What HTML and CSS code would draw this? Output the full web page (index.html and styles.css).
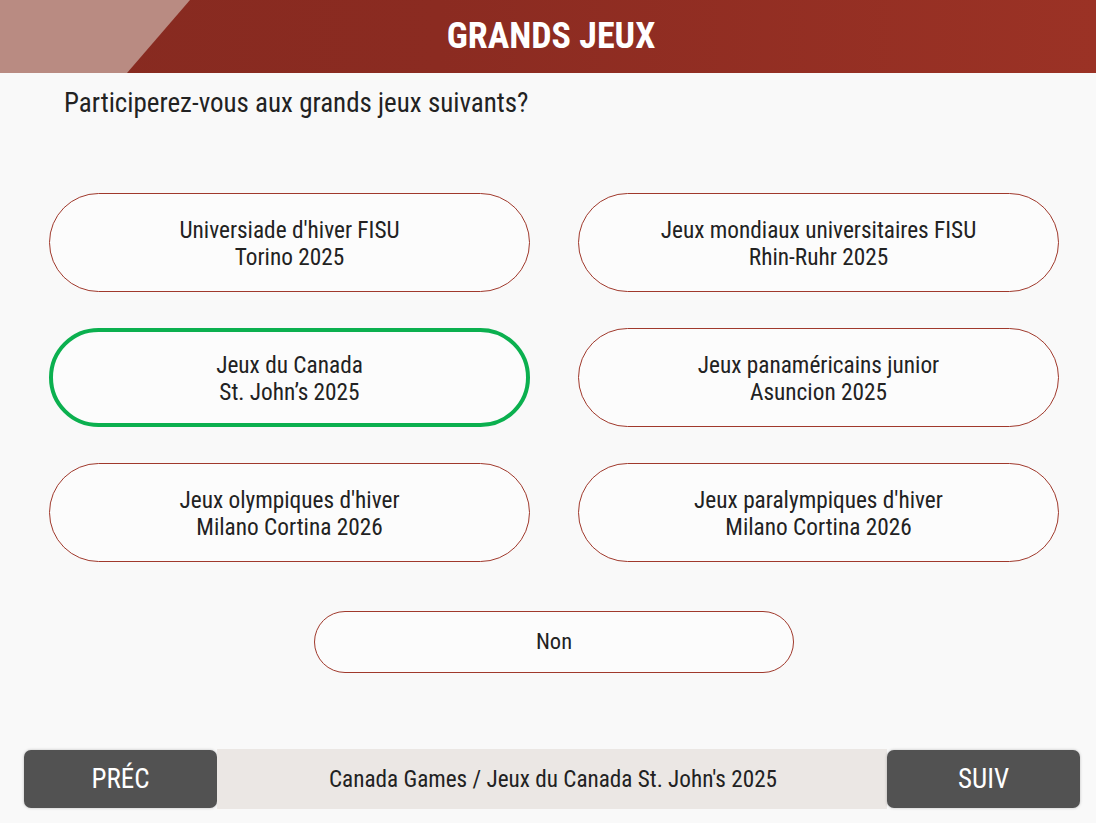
FILE: index.html
```html
<!DOCTYPE html>
<html lang="fr">
<head>
<meta charset="utf-8">
<title>Grands jeux</title>
<link rel="stylesheet" href="styles.css">
</head>
<body>
<div class="page">
  <header class="header">
    <h1 class="title">GRANDS JEUX</h1>
  </header>
  <p class="question">Participerez-vous aux grands jeux suivants?</p>
  <div class="options">
    <button class="option">Universiade d'hiver FISU<br>Torino 2025</button>
    <button class="option">Jeux mondiaux universitaires FISU<br>Rhin-Ruhr 2025</button>
    <button class="option selected">Jeux du Canada<br>St. John’s 2025</button>
    <button class="option">Jeux panaméricains junior<br>Asuncion 2025</button>
    <button class="option">Jeux olympiques d'hiver<br>Milano Cortina 2026</button>
    <button class="option">Jeux paralympiques d'hiver<br>Milano Cortina 2026</button>
  </div>
  <div class="none-row">
    <button class="option none">Non</button>
  </div>
  <footer class="footer">
    <button class="nav">PRÉC</button>
    <div class="status">Canada Games / Jeux du Canada St. John's 2025</div>
    <button class="nav">SUIV</button>
  </footer>
</div>
</body>
</html>
```
FILE: styles.css
```css
* { box-sizing: border-box; }
html, body { margin: 0; padding: 0; }
body {
  background: #f9f9f9;
  font-family: "Roboto Condensed", "Roboto", "Liberation Sans", sans-serif;
  font-stretch: condensed;
  color: #222;
}
.page {
  width: 1096px;
  height: 823px;
  display: flex;
  flex-direction: column;
  overflow: hidden;
}
.header {
  position: relative;
  height: 73px;
  flex: none;
  background: linear-gradient(90deg, #862a20 0%, #8b2b21 40%, #9b3225 100%);
  display: flex;
  align-items: center;
  justify-content: center;
}
.header::before {
  content: "";
  position: absolute;
  left: 0; top: 0; bottom: 0;
  width: 191px;
  background: #b98b82;
  clip-path: polygon(0 0, 190px 0, 127px 100%, 0 100%);
}
.title {
  margin: 0;
  color: #fff;
  font-size: 36px;
  font-weight: 700;
  position: relative;
  top: -1px;
  left: 3px;
}
.question {
  margin: 12px 0 0 64px;
  font-size: 27px;
  line-height: 36px;
  color: #222;
}
.options {
  margin: 72px 0 0 49px;
  display: grid;
  grid-template-columns: 481px 481px;
  column-gap: 48px;
  row-gap: 36px;
}
.option {
  font-family: inherit;
  font-stretch: condensed;
  height: 99px;
  border: 1.5px solid #a0392c;
  border-radius: 50px;
  background: #fcfcfc;
  color: #222;
  font-size: 23.3px;
  line-height: 27px;
  padding: 2px 0 0;
  text-align: center;
}
.option.selected {
  border: 4px solid #0bb04f;
}
.none-row {
  display: flex;
  justify-content: center;
  margin-top: 49px;
  padding-left: 12px;
}
.option.none {
  width: 480px;
  height: 62px;
  border-radius: 31px;
  font-size: 22.5px;
  padding: 0 0 2px;
}
.footer {
  margin-top: 76px;
  margin-left: 24px;
  display: flex;
  align-items: center;
  width: 1056px;
}
.nav {
  width: 193px;
  height: 58px;
  border: none;
  border-radius: 7px;
  background: #525252;
  color: #fff;
  font-family: inherit;
  font-stretch: condensed;
  font-size: 27px;
  padding: 0 0 1px;
  box-shadow: 0 0 3px rgba(0,0,0,0.25);
  flex: none;
}
.status {
  flex: 1;
  height: 60px;
  background: #ebe7e4;
  display: flex;
  align-items: center;
  justify-content: center;
  font-size: 23.2px;
  color: #222;
  padding-left: 2px;
}
```
